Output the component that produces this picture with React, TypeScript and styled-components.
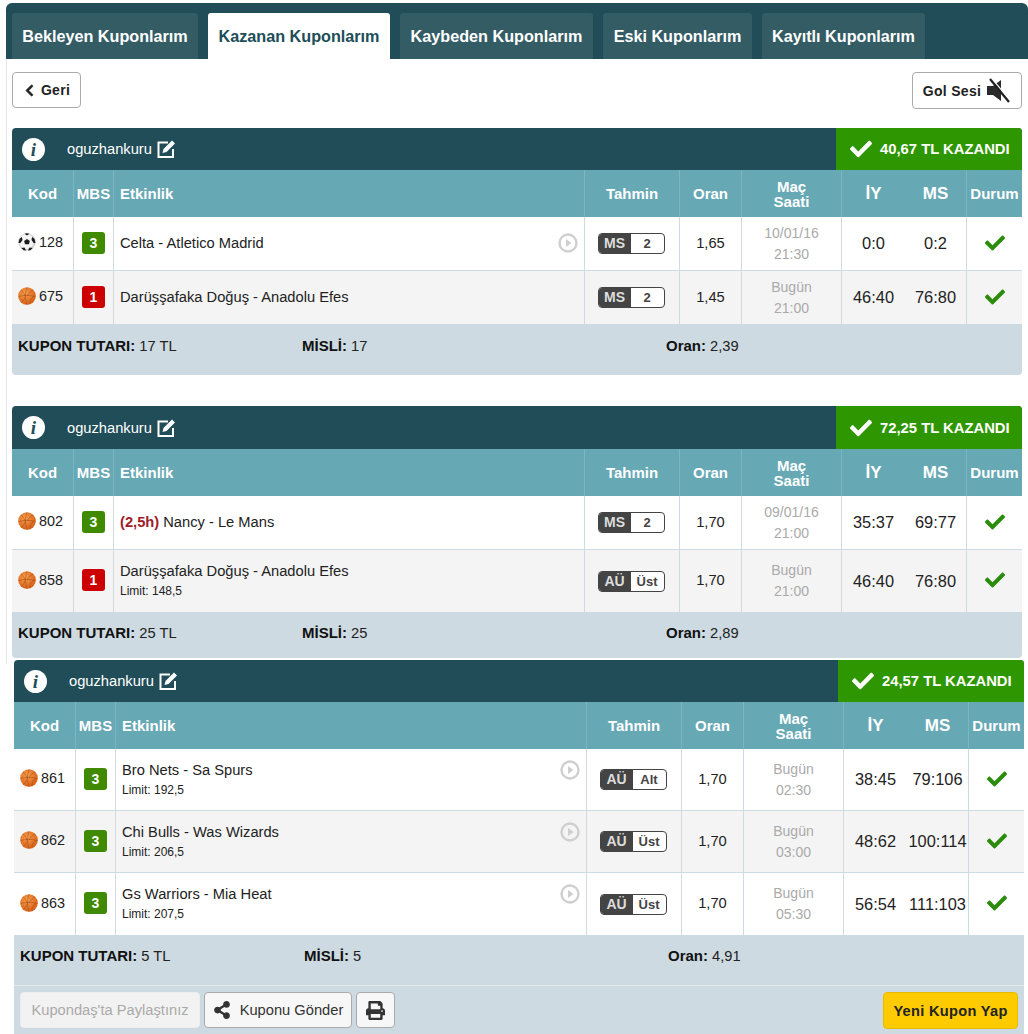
import React from 'react';
import styled, { createGlobalStyle } from 'styled-components';
import { FaCheck, FaChevronLeft, FaPrint, FaShareAlt } from 'react-icons/fa';

const Global = createGlobalStyle`
  html, body { margin: 0; padding: 0; background: #fff; overflow: hidden; }
  body { font-family: "Liberation Sans", Arial, sans-serif; font-size: 14.7px; color: #222; }
`;

const Shell = styled.div`
  padding: 3px 0 0 6px;
  width: 1022px;
  height: 1031px;
  overflow: hidden;
`;
const TabBar = styled.nav`
  display: flex;
  gap: 10px;
  height: 56px;
  box-sizing: border-box;
  padding: 10px 0 0 6px;
  background: #204d57;
  border-radius: 6px 6px 0 0;
`;
const Tab = styled.div<{ $active?: boolean; $w: number }>`
  width: ${p => p.$w}px;
  text-align: center;
  font-size: 16.2px;
  font-weight: 700;
  line-height: 46px;
  white-space: nowrap;
  border-radius: 3px 3px 0 0;
  color: ${p => (p.$active ? '#204d57' : '#fff')};
  background: ${p => (p.$active ? '#fff' : '#345c65')};
`;
const Panel = styled.section`
  border-left: 1px solid #e6e6e6;
  padding: 13px 6px 6px 5px;
`;
const TopRow = styled.div`
  display: flex;
  justify-content: space-between;
  align-items: flex-start;
  margin-bottom: 19px;
`;
const TopButton = styled.button<{ $w: number; $h: number }>`
  display: flex;
  align-items: center;
  justify-content: center;
  gap: 5px;
  width: ${p => p.$w}px;
  height: ${p => p.$h}px;
  padding: 0;
  background: #fff;
  border: 1px solid #aaa;
  border-radius: 4px;
  color: #222;
  font: 700 14px "Liberation Sans", Arial, sans-serif;
  letter-spacing: 0.3px;
`;
const BackIcon = styled(FaChevronLeft)`
  font-size: 13px;
  stroke: #222;
  stroke-width: 30px;
`;
const Card = styled.article<{ $shift?: boolean; $gap?: number }>`
  width: 1010px;
  margin-bottom: ${p => p.$gap ?? 0}px;
  ${p => p.$shift && 'position: relative; margin: -4px 0 0 8px;'}
`;
const CardHead = styled.header<{ $h: number }>`
  display: flex;
  align-items: center;
  height: ${p => p.$h}px;
  background: #204d57;
  border-radius: 4px 4px 0 0;
  color: #fff;
`;
const Info = styled.span`
  width: 23px;
  height: 23px;
  margin: 0 22px 0 10px;
  border-radius: 50%;
  background: #fff;
  color: #204d57;
  font: italic 700 19px/23px "Liberation Serif", serif;
  text-align: center;
`;
const User = styled.span`
  margin-right: 4px;
`;
const Won = styled.div`
  display: flex;
  align-items: center;
  gap: 8px;
  align-self: stretch;
  margin-left: auto;
  width: 186px;
  box-sizing: border-box;
  padding-left: 14px;
  background: #2d9600;
  border-radius: 0 4px 0 0;
  font-weight: 700;
  font-size: 14.8px;
  white-space: nowrap;
`;
const Grid = styled.div<{ $h: number }>`
  display: grid;
  grid-template-columns: 62px 40px 471px 95px 62px 100px 63px 62px 55px;
  height: ${p => p.$h}px;
`;
const HeadRow = styled(Grid)`
  background: #67a8b5;
  color: #fff;
  font-weight: 700;
  font-size: 15px;
`;
const HeadCell = styled.div<{ $left?: boolean; $plain?: boolean; $big?: boolean }>`
  display: flex;
  align-items: center;
  justify-content: ${p => (p.$left ? 'flex-start' : 'center')};
  padding-left: ${p => (p.$left ? '6px' : '0')};
  text-align: center;
  line-height: 15px;
  white-space: nowrap;
  font-size: ${p => (p.$big ? '17px' : '15px')};
  border-right: ${p => (p.$plain ? '0' : '1px solid #7db5c0')};
`;
const BodyRow = styled(Grid)<{ $alt?: boolean; $line?: boolean }>`
  box-sizing: border-box;
  background: ${p => (p.$alt ? '#f4f4f4' : '#fff')};
  border-bottom: ${p => (p.$line ? '1px solid #cfdbe3' : '0')};
`;
const Cell = styled.div<{ $plain?: boolean }>`
  display: flex;
  align-items: center;
  justify-content: center;
  min-width: 0;
  box-sizing: border-box;
  padding-bottom: 2px;
  border-right: ${p => (p.$plain ? '0' : '1px solid #cfdbe3')};
`;
const CodeCell = styled(Cell)`
  gap: 3px;
  padding-right: 4px;
  padding-bottom: 3px;
  color: #222;
  font-size: 14.4px;
`;
const Badge = styled.span<{ $one: boolean }>`
  width: 23px;
  height: 22px;
  border-radius: 3px;
  background: ${p => (p.$one ? '#cc0000' : '#3f8a00')};
  color: #fff;
  font-weight: 700;
  font-size: 14px;
  line-height: 22px;
  text-align: center;
`;
const EventCell = styled(Cell)<{ $solo: boolean }>`
  flex-direction: column;
  align-items: stretch;
  padding: 0 6px ${p => (p.$solo ? '2px' : '0')};
`;
const EventTitle = styled.div`
  display: flex;
  justify-content: space-between;
  align-items: center;
  line-height: 20px;
`;
const Hcp = styled.b`
  color: #a01c2a;
`;
const Limit = styled.div`
  font-size: 12px;
  line-height: 20px;
`;
const Pill = styled.div`
  display: flex;
  width: 67px;
  height: 21px;
  margin: 2px 2px 0 0;
  box-sizing: border-box;
  border: 1px solid #444;
  border-radius: 4px;
  overflow: hidden;
  font-weight: 700;
  font-size: 14px;
  line-height: 19px;
  background: #fff;
`;
const PillKey = styled.span`
  width: 32px;
  background: #444;
  color: #ddd;
  text-align: center;
`;
const PillValue = styled.span`
  flex: 1;
  color: #444;
  text-align: center;
  font-size: 13px;
`;
const DateCell = styled(Cell)`
  flex-direction: column;
  padding-bottom: 0;
  color: #aaa;
  font-size: 14px;
  line-height: 21px;
`;
const Score = styled(Cell)`
  padding-bottom: 0;
  font-size: 16.4px;
  white-space: nowrap;
`;
const Footer = styled.footer<{ $h: number; $top: number; $last?: boolean; $round?: boolean }>`
  display: grid;
  grid-template-columns: 284px 364px 1fr;
  height: ${p => p.$h}px;
  box-sizing: border-box;
  padding: ${p => p.$top}px 0 0 6px;
  background: #cddae1;
  line-height: 18px;
  border-radius: ${p => (p.$round ? '0 0 4px 4px' : '0')};
  border-bottom: ${p => (p.$last ? '1px solid #e4ebef' : '0')};
`;
const Label = styled.b`
  font-size: 15px;
  color: #111;
`;
const Actions = styled.div`
  display: flex;
  gap: 4px;
  height: 60px;
  padding: 6px 6px 0;
  box-sizing: border-box;
  background: #cddae1;
  border-radius: 0 0 4px 4px;
`;
const ActionButton = styled.button<{ $w: number; $muted?: boolean }>`
  display: flex;
  align-items: center;
  justify-content: center;
  gap: 9px;
  width: ${p => p.$w}px;
  height: 36px;
  padding: 0;
  border: 1px solid ${p => (p.$muted ? '#eee' : '#aaa')};
  border-radius: 4px;
  background: ${p => (p.$muted ? '#f2f2f2' : '#f7f7f7')};
  color: ${p => (p.$muted ? '#aaa' : '#333')};
  font: 14.7px "Liberation Sans", Arial, sans-serif;
  white-space: nowrap;
`;
const NewCoupon = styled.button`
  margin-left: auto;
  width: 135px;
  height: 37px;
  padding: 0;
  border: 1px solid #e8bb00;
  border-radius: 4px;
  background: #fecb00;
  color: #222;
  font: 700 14.6px "Liberation Sans", Arial, sans-serif;
  letter-spacing: 0.3px;
`;
const GreenCheck = styled(FaCheck)`
  color: #2b8c0c;
  font-size: 20px;
`;

const Soccer = () => (
  <svg width="18" height="18" viewBox="0 0 18 18">
    <circle cx="9" cy="9" r="8.700" fill="#cfcfcf" />
    <circle cx="8.500" cy="8.500" r="7.600" fill="#f4f4f4" />
    <path d="M9 6l2.900 2-1 3.300H7.100l-1-3.300z" fill="#1c1c1c" />
    <path d="M6.500 .8L9 2.500 11.500 .8 9 .2zM.4 9.800l1.200-4 2.300-1.900.6 3-2.300 3.300zM17.600 9.800l-1.200-4-2.300-1.900-.6 3 2.300 3.300zM3.500 15l3-.5 1.500 3-2.500-.3zM14.500 15l-3-.5-1.500 3 2.500-.3z" fill="#1c1c1c" />
  </svg>
);
const Basket = () => (
  <svg width="18" height="18" viewBox="0 0 18 18">
    <defs>
      <radialGradient id="bb" cx=".4" cy=".35" r=".75">
        <stop offset="0" stopColor="#f99d4c" />
        <stop offset="1" stopColor="#d2570f" />
      </radialGradient>
    </defs>
    <circle cx="9" cy="9" r="8.800" fill="url(#bb)" />
    <path d="M.6 9.500C6 8 12 8 17.400 9.500M9 .4C7 6 7 12 9 17.600M3 3c3 3 4 4.500 4 6.500M15 3c-3 2-5 3-5.500 6M3.500 15.500c2-2 3-3.500 3.500-5.500M12 16.500c0-3 .5-5 3.500-7" fill="none" stroke="#8a3f10" strokeOpacity=".7" strokeWidth=".6" />
  </svg>
);
const Play = () => (
  <svg width="20" height="20" viewBox="0 0 20 20">
    <circle cx="10" cy="10" r="8.500" fill="none" stroke="#cfcfcf" strokeWidth="2.400" />
    <path d="M8 6l5.500 4L8 14z" fill="#cfcfcf" />
  </svg>
);
const Mute = () => (
  <svg width="25" height="25" viewBox="0 0 25 25">
    <path d="M1 8h6l8-6v21l-8-6H1z" fill="#2a2a2a" />
    <path d="M4 1l19 23" stroke="#fff" strokeWidth="1.200" transform="translate(1.500 -1)" />
    <path d="M4 1l19 23" stroke="#222" strokeWidth="2.200" />
  </svg>
);
const EditIcon = () => (
  <svg width="20" height="20" viewBox="0 0 20 20">
    <path d="M12 3.500H2.500v14.500H17v-8" fill="none" stroke="#fff" strokeWidth="2" />
    <path d="M6.500 14l1-4 8.500-8.500 3 3L10.500 13z" fill="#fff" />
  </svg>
);

type Row = {
  sport: 's' | 'b'; code: string; mbs: string; hcp?: string; name: string; limit?: string; play?: boolean;
  pk: string; pv: string; odd: string; date: string; time: string; iy: string; ms: string; h: number; last?: boolean;
};
type Coupon = { head: number; prize: string; rows: Row[]; stake: string; misli: string; oran: string; foot: number; top: number };

const coupons: Coupon[] = [
  {
    head: 42, prize: '40,67', stake: '17 TL', misli: '17', oran: '2,39', foot: 51, top: 13,
    rows: [
      { sport: 's', code: '128', mbs: '3', name: 'Celta - Atletico Madrid', play: true, pk: 'MS', pv: '2', odd: '1,65', date: '10/01/16', time: '21:30', iy: '0:0', ms: '0:2', h: 54 },
      { sport: 'b', code: '675', mbs: '1', name: 'Darüşşafaka Doğuş - Anadolu Efes', pk: 'MS', pv: '2', odd: '1,45', date: 'Bugün', time: '21:00', iy: '46:40', ms: '76:80', h: 53, last: true },
    ],
  },
  {
    head: 43, prize: '72,25', stake: '25 TL', misli: '25', oran: '2,89', foot: 46, top: 12,
    rows: [
      { sport: 'b', code: '802', mbs: '3', hcp: '(2,5h)', name: 'Nancy - Le Mans', pk: 'MS', pv: '2', odd: '1,70', date: '09/01/16', time: '21:00', iy: '35:37', ms: '69:77', h: 54 },
      { sport: 'b', code: '858', mbs: '1', name: 'Darüşşafaka Doğuş - Anadolu Efes', limit: 'Limit: 148,5', pk: 'AÜ', pv: 'Üst', odd: '1,70', date: 'Bugün', time: '21:00', iy: '46:40', ms: '76:80', h: 62, last: true },
    ],
  },
  {
    head: 42, prize: '24,57', stake: '5 TL', misli: '5', oran: '4,91', foot: 51, top: 12,
    rows: [
      { sport: 'b', code: '861', mbs: '3', name: 'Bro Nets - Sa Spurs', limit: 'Limit: 192,5', play: true, pk: 'AÜ', pv: 'Alt', odd: '1,70', date: 'Bugün', time: '02:30', iy: '38:45', ms: '79:106', h: 62 },
      { sport: 'b', code: '862', mbs: '3', name: 'Chi Bulls - Was Wizards', limit: 'Limit: 206,5', play: true, pk: 'AÜ', pv: 'Üst', odd: '1,70', date: 'Bugün', time: '03:00', iy: '48:62', ms: '100:114', h: 62 },
      { sport: 'b', code: '863', mbs: '3', name: 'Gs Warriors - Mia Heat', limit: 'Limit: 207,5', play: true, pk: 'AÜ', pv: 'Üst', odd: '1,70', date: 'Bugün', time: '05:30', iy: '56:54', ms: '111:103', h: 62, last: true },
    ],
  },
];

const tabs: [string, number][] = [
  ['Bekleyen Kuponlarım', 186],
  ['Kazanan Kuponlarım', 182],
  ['Kaybeden Kuponlarım', 193],
  ['Eski Kuponlarım', 149],
  ['Kayıtlı Kuponlarım', 163],
];

function CouponCard({ c, shift, gap, actions }: { c: Coupon; shift?: boolean; gap?: number; actions?: boolean }) {
  return (
    <Card $shift={shift} $gap={gap}>
      <CardHead $h={c.head}>
        <Info>i</Info>
        <User>oguzhankuru</User>
        <EditIcon />
        <Won>
          <FaCheck size={22} />
          {c.prize} TL KAZANDI
        </Won>
      </CardHead>
      <HeadRow $h={47}>
        <HeadCell>Kod</HeadCell>
        <HeadCell>MBS</HeadCell>
        <HeadCell $left>Etkinlik</HeadCell>
        <HeadCell>Tahmin</HeadCell>
        <HeadCell>Oran</HeadCell>
        <HeadCell>Maç<br />Saati</HeadCell>
        <HeadCell $plain $big>İY</HeadCell>
        <HeadCell $big>MS</HeadCell>
        <HeadCell $plain>Durum</HeadCell>
      </HeadRow>
      {c.rows.map((r, i) => (
        <BodyRow key={r.code} $h={r.h} $alt={i % 2 === 1} $line={!r.last}>
          <CodeCell>{r.sport === 's' ? <Soccer /> : <Basket />}{r.code}</CodeCell>
          <Cell><Badge $one={r.mbs === '1'}>{r.mbs}</Badge></Cell>
          <EventCell $solo={!r.limit}>
            <EventTitle>
              <span>{r.hcp && <Hcp>{r.hcp} </Hcp>}{r.name}</span>
              {r.play && <Play />}
            </EventTitle>
            {r.limit && <Limit>{r.limit}</Limit>}
          </EventCell>
          <Cell><Pill><PillKey>{r.pk}</PillKey><PillValue>{r.pv}</PillValue></Pill></Cell>
          <Cell>{r.odd}</Cell>
          <DateCell><span>{r.date}</span><span>{r.time}</span></DateCell>
          <Score $plain>{r.iy}</Score>
          <Score>{r.ms}</Score>
          <Cell $plain><GreenCheck /></Cell>
        </BodyRow>
      ))}
      <Footer $h={c.foot} $top={c.top} $last={actions} $round={!actions}>
        <span><Label>KUPON TUTARI:</Label> {c.stake}</span>
        <span><Label>MİSLİ:</Label> {c.misli}</span>
        <span><Label>Oran:</Label> {c.oran}</span>
      </Footer>
      {actions && (
        <Actions>
          <ActionButton $w={180} $muted>Kupondaş'ta Paylaştınız</ActionButton>
          <ActionButton $w={148}><FaShareAlt size={18} />Kuponu Gönder</ActionButton>
          <ActionButton $w={39}><FaPrint size={19} /></ActionButton>
          <NewCoupon>Yeni Kupon Yap</NewCoupon>
        </Actions>
      )}
    </Card>
  );
}

export default function App() {
  return (
    <Shell>
      <Global />
      <TabBar>
        {tabs.map(([t, w], i) => <Tab key={t} $w={w} $active={i === 1}>{t}</Tab>)}
      </TabBar>
      <Panel>
        <TopRow>
          <TopButton $w={69} $h={36}><BackIcon />Geri</TopButton>
          <TopButton $w={110} $h={37}>Gol Sesi<Mute /></TopButton>
        </TopRow>
        <CouponCard c={coupons[0]} gap={31} />
        <CouponCard c={coupons[1]} />
      </Panel>
      <CouponCard c={coupons[2]} shift actions />
    </Shell>
  );
}
